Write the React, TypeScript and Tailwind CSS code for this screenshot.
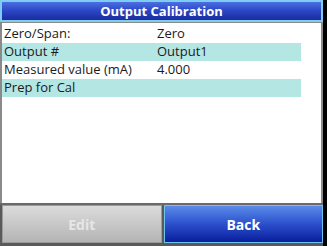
export default function App() {
  const rows = [
    { label: 'Zero/Span:', value: 'Zero', hl: false },
    { label: 'Output #', value: 'Output1', hl: true },
    { label: 'Measured value (mA)', value: '4.000', hl: false },
    { label: 'Prep for Cal', value: '', hl: true },
  ]

  return (
    <div className="flex h-[246px] w-[327px] flex-col bg-black" style={{ fontFamily: '"Open Sans", "DejaVu Sans", sans-serif' }}>
      {/* Title */}
      <div className="mr-[4px] flex h-[22px] items-center justify-center border-2 border-[#7ccdf0] bg-gradient-to-b from-[#4d6ee2] via-[#2a45c4] to-[#1b2c9e]">
        <span className="text-[13px] font-bold leading-none text-white">Output Calibration</span>
      </div>

      {/* Body */}
      <div className="mr-[4px] flex flex-1 flex-col border-x-2 border-t border-[#8a8a8a] bg-white pt-[2px]">
        {rows.map((r) => (
          <div
            key={r.label}
            className={`flex h-[18px] w-[299px] items-center px-[2px] text-[13px] text-[#1a1a1a] ${r.hl ? 'bg-[#b4e6e4]' : ''}`}
          >
            <span className="w-[153px]">{r.label}</span>
            <span>{r.value}</span>
          </div>
        ))}
      </div>

      {/* Buttons */}
      <div className="mr-[4px] flex h-[43px] gap-[2px] border-t-2 border-[#6a6a6a] bg-[#5a5a5a] pb-[3px] pl-[2px]">
        <div className="flex flex-1 items-center justify-center border border-[#9a9a9a] bg-gradient-to-b from-[#dcdcdc] to-[#b4b4b4]">
          <span className="text-[14px] font-bold text-[#e6e6e6]">Edit</span>
        </div>
        <div className="flex flex-1 items-center justify-center border border-[#6cc4f0] bg-gradient-to-b from-[#5b8be8] via-[#2d4fcc] to-[#0b1c9c]">
          <span className="text-[14px] font-bold text-white">Back</span>
        </div>
      </div>
    </div>
  )
}
